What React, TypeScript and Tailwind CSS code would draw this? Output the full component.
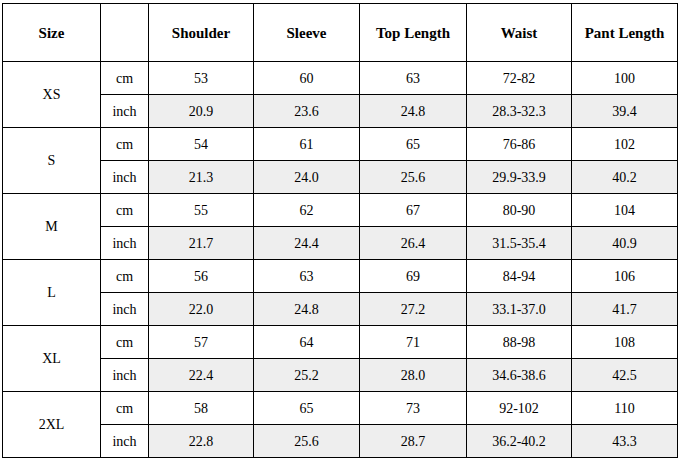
import React from "react";

const headers = ["Shoulder", "Sleeve", "Top Length", "Waist", "Pant Length"];

const data: { size: string; cm: string[]; inch: string[] }[] = [
  { size: "XS", cm: ["53", "60", "63", "72-82", "100"], inch: ["20.9", "23.6", "24.8", "28.3-32.3", "39.4"] },
  { size: "S", cm: ["54", "61", "65", "76-86", "102"], inch: ["21.3", "24.0", "25.6", "29.9-33.9", "40.2"] },
  { size: "M", cm: ["55", "62", "67", "80-90", "104"], inch: ["21.7", "24.4", "26.4", "31.5-35.4", "40.9"] },
  { size: "L", cm: ["56", "63", "69", "84-94", "106"], inch: ["22.0", "24.8", "27.2", "33.1-37.0", "41.7"] },
  { size: "XL", cm: ["57", "64", "71", "88-98", "108"], inch: ["22.4", "25.2", "28.0", "34.6-38.6", "42.5"] },
  { size: "2XL", cm: ["58", "65", "73", "92-102", "110"], inch: ["22.8", "25.6", "28.7", "36.2-40.2", "43.3"] },
];

export default function App() {
  return (
    <div className="min-h-screen bg-white pl-[2px] pt-[3px]" style={{ fontFamily: '"Liberation Serif", "Times New Roman", serif' }}>
      <div className="grid w-fit grid-cols-[97px_47px_104px_105px_106px_104px_105px] grid-rows-[57px_repeat(12,32px)] gap-px bg-black p-px text-black">
        <div className="flex items-center justify-center bg-white pt-[2px] text-[15px] font-bold">Size</div>
        <div className="bg-white"></div>
        {headers.map((h) => (
          <div key={h} className="flex items-center justify-center bg-white pt-[2px] text-[15px] font-bold">
            {h}
          </div>
        ))}
        {data.map((row) => (
          <React.Fragment key={row.size}>
            <div className="row-span-2 flex items-center justify-center bg-white text-[14px]">{row.size}</div>
            <div className="flex items-center justify-center bg-white text-[14px]">cm</div>
            {row.cm.map((v, i) => (
              <div key={"c" + i} className="flex items-center justify-center bg-white text-[14px]">
                {v}
              </div>
            ))}
            <div className="flex items-center justify-center bg-white text-[14px]">inch</div>
            {row.inch.map((v, i) => (
              <div key={"i" + i} className="flex items-center justify-center bg-[#eeeeee] text-[14px]">
                {v}
              </div>
            ))}
          </React.Fragment>
        ))}
      </div>
    </div>
  );
}
